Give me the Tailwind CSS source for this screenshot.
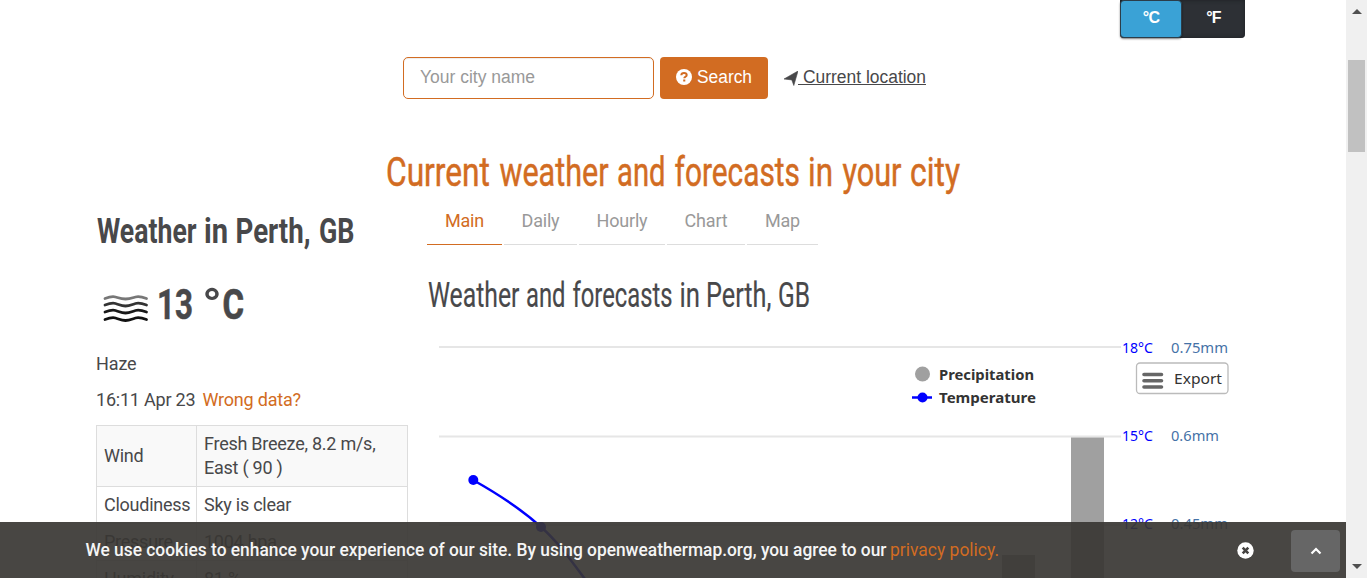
<!DOCTYPE html>
<html lang="en">
<head>
<meta charset="utf-8">
<title>Weather in Perth, GB</title>
<script src="https://cdn.jsdelivr.net/npm/@tailwindcss/browser@4"></script>
</head>
<body class="flex h-[578px] w-[1367px] overflow-hidden bg-white font-[Roboto,sans-serif] text-[18px] leading-6 text-[#48484a]">
<main class="relative h-[578px] w-[1346px] shrink-0 overflow-hidden">
  <!-- Unit switch -->
  <div class="flex h-[38px] justify-end pr-[101px]">
    <div class="flex w-[125px] rounded-b bg-[#2d3035] text-center font-[Liberation_Sans,sans-serif] text-[16px] font-bold leading-[34px] text-white shadow-[inset_0_0_4px_#1d2024]">
      <div class="w-[62px] rounded-[4px] border border-[#2b3d4a] bg-[#3aa2d6] tracking-[-0.8px] shadow-[0_1px_2px_rgba(0,0,0,.5)]">°C</div>
      <div class="w-[63px] pt-px tracking-[-0.8px]">°F</div>
    </div>
  </div>
  <!-- City search -->
  <div class="ml-[403px] mt-[19px] flex h-[42px] font-[Liberation_Sans,sans-serif] text-[18px] leading-[40px]">
    <div class="w-[251px] rounded-[5px] border border-[#d26c22] pl-4 text-[#999] shadow-[inset_0_1px_1px_rgba(0,0,0,.075)]"><svg class="block" width="120" height="40"><text x="0" y="25" textLength="115" lengthAdjust="spacingAndGlyphs" fill="#999">Your city name</text></svg></div>
    <button class="ml-1.5 flex w-[108px] items-center rounded-[4px] bg-[#d26c22] pb-0.5 pl-4 text-white">
      <svg width="16" height="16" viewBox="0 0 16 16"><circle cx="8" cy="8" r="8" fill="#fff"/><path d="M5.3 6.2C5.4 4.3 6.500 3.900 8 3.900c1.700 0 2.700.9 2.700 2.100 0 1.800-2.400 1.700-2.400 3.300" fill="none" stroke="#d26c22" stroke-width="2"/><path d="M7.200 10.500h2.100v2H7.200z" fill="#d26c22"/></svg>
      <svg class="ml-[5px]" width="56" height="40"><text x="0" y="26" textLength="55" lengthAdjust="spacingAndGlyphs" fill="#fff">Search</text></svg>
    </button>
    <a class="ml-4 flex items-center"><svg width="14" height="15" viewBox="0 0 14 15"><path d="M14 0 9.800 14.500 7.800 8.900 0 8z" fill="#48484a" stroke="#48484a" stroke-width=".6"/></svg><svg width="130" height="42"><path d="M0 27.500h128" stroke="#48484a"/><text x="5" y="26" textLength="123" lengthAdjust="spacingAndGlyphs" fill="#48484a">Current location</text></svg></a>
  </div>
  <h1 class="mt-[51px] h-[55px] pl-[386px]"><svg width="580" height="55" viewBox="386 150 580 55" font-size="41.500" fill="#d26c22" stroke="#d26c22" stroke-width=".5">
    <text x="386" y="186" textLength="104" lengthAdjust="spacingAndGlyphs">Current</text>
    <text x="499.500" y="186" textLength="109" lengthAdjust="spacingAndGlyphs">weather</text>
    <text x="617" y="186" textLength="48.500" lengthAdjust="spacingAndGlyphs">and</text>
    <text x="674.500" y="186" textLength="125.500" lengthAdjust="spacingAndGlyphs">forecasts</text>
    <text x="808" y="186" textLength="25" lengthAdjust="spacingAndGlyphs">in</text>
    <text x="842.500" y="186" textLength="59" lengthAdjust="spacingAndGlyphs">your</text>
    <text x="910" y="186" textLength="50" lengthAdjust="spacingAndGlyphs">city</text>
  </svg></h1>
  <div class="flex pl-24">
    <section class="w-[331px] shrink-0">
      <h2 class="h-[65px]"><svg width="320" height="65" viewBox="96 205 320 65" font-size="35" font-weight="700" fill="#48484a">
        <text x="97" y="243" textLength="99.500" lengthAdjust="spacingAndGlyphs">Weather</text>
        <text x="204" y="243" textLength="24" lengthAdjust="spacingAndGlyphs">in</text>
        <text x="235.500" y="243" textLength="75" lengthAdjust="spacingAndGlyphs">Perth,</text>
        <text x="319" y="243" textLength="35.500" lengthAdjust="spacingAndGlyphs">GB</text>
      </svg></h2>
      <div class="h-[82px]"><svg width="200" height="82" viewBox="96 270 200 82">
        <g fill="none" stroke-linecap="round" stroke-width="2.800">
          <path d="M105 298.500c4-1.500 7-2.500 10.500-1.500s6 2 10 2 6.500-1 10-2 7 0 11 1.500" stroke="#777"/>
          <path d="M105 305c4-1.500 7-2.500 10.500-1.500s6 2.500 10 2.500 6.500-1.500 10-2.500 7 0 11 1.500" stroke="#333"/>
          <path d="M105 312c4-1.500 7-2.500 10.500-1.500s6 2.500 10 2.500 6.500-1.500 10-2.500 7 0 11 1.500" stroke="#181818"/>
          <path d="M105 319.500c4-1.500 7-2.500 10.500-1.500s6 2.500 10 2.500 6.500-1.500 10-2.500 7 0 11 1.500" stroke="#111"/>
        </g>
        <g font-weight="700" font-size="42" fill="#48484a">
          <text x="157" y="319" textLength="36" lengthAdjust="spacingAndGlyphs" stroke="#48484a" stroke-width=".5">13</text>
          <text x="202" y="321" textLength="20" lengthAdjust="spacingAndGlyphs" font-size="46" font-weight="500">°</text>
          <text x="222.500" y="319" textLength="21.500" lengthAdjust="spacingAndGlyphs" stroke="#48484a" stroke-width=".7">C</text>
        </g>
      </svg></div>
      <p class="tracking-[-0.1px]">Haze</p>
      <p class="mt-3 tracking-[-0.22px]">16:11 Apr 23 <a class="ml-[3px] text-[#d26c22]">Wrong data?</a></p>
      <table class="mt-[13px] w-[312px] table-fixed border-collapse tracking-[-0.25px]">
        <colgroup><col class="w-[100px]"><col></colgroup>
        <tr class="bg-[#f9f9f9]"><td class="border border-[#ddd] px-[7px] py-1.5">Wind</td><td class="border border-[#ddd] px-[7px] py-1.5">Fresh Breeze, 8.2 m/s,<br>East ( 90 )</td></tr>
        <tr><td class="border border-[#ddd] px-[7px] py-1.5">Cloudiness</td><td class="border border-[#ddd] px-[7px] py-1.5">Sky is clear</td></tr>
        <tr class="bg-[#f9f9f9]"><td class="border border-[#ddd] px-[7px] py-1.5">Pressure</td><td class="border border-[#ddd] px-[7px] py-1.5">1004 hpa</td></tr>
        <tr><td class="border border-[#ddd] px-[7px] py-1.5">Humidity</td><td class="border border-[#ddd] px-[7px] py-1.5">81 %</td></tr>
      </table>
    </section>
    <section class="w-[820px] shrink-0">
      <nav class="flex h-10 gap-0.5 text-center leading-8 tracking-[-0.2px] text-[#999]">
        <a class="w-[75px] border-b border-[#d26c22] text-[#d26c22]">Main</a>
        <a class="w-[73px] border-b border-[#ddd]">Daily</a>
        <a class="w-[86px] border-b border-[#ddd]">Hourly</a>
        <a class="w-[78px] border-b border-[#ddd]">Chart</a>
        <a class="w-[71px] border-b border-[#ddd]">Map</a>
      </nav>
      <h3 class="h-[90px]"><svg width="400" height="90" viewBox="427 245 400 90" font-size="35" fill="#48484a" stroke="#48484a" stroke-width=".2">
        <text x="428" y="307" textLength="91.500" lengthAdjust="spacingAndGlyphs">Weather</text>
        <text x="526" y="307" textLength="39.500" lengthAdjust="spacingAndGlyphs">and</text>
        <text x="572.500" y="307" textLength="100" lengthAdjust="spacingAndGlyphs">forecasts</text>
        <text x="679.500" y="307" textLength="20.500" lengthAdjust="spacingAndGlyphs">in</text>
        <text x="706" y="307" textLength="65.500" lengthAdjust="spacingAndGlyphs">Perth,</text>
        <text x="778" y="307" textLength="32" lengthAdjust="spacingAndGlyphs">GB</text>
      </svg></h3>
      <!-- Forecast chart -->
      <svg class="block" width="820" height="243" viewBox="427 335 820 243" font-family="Noto Sans, sans-serif" font-size="14.500">
        <path d="M439 347h682M439 436.500h682M439 525h682" stroke="#e6e6e6" stroke-width="2"/>
        <path d="M1071 437.500h33V578h-33zM1002 555h33v23h-33z" fill="#a0a0a0"/>
        <path d="M473 480C498 494 519 507 541 527C557 541 570 559 585 579" fill="none" stroke="#00f" stroke-width="2.500"/>
        <circle cx="473.300" cy="480" r="5" fill="#00f"/><circle cx="541" cy="527" r="5" fill="#00f"/>
        <circle cx="922.500" cy="374" r="7.500" fill="#a0a0a0"/>
        <path d="M912 397.500h20" stroke="#00f" stroke-width="2.500"/><circle cx="922.500" cy="397.500" r="5" fill="#00f"/>
        <g font-weight="700" fill="#333"><text x="939" y="380" textLength="95" lengthAdjust="spacingAndGlyphs">Precipitation</text><text x="939" y="403" textLength="97" lengthAdjust="spacingAndGlyphs">Temperature</text></g>
        <g fill="#00f" font-size="14"><text x="1122" y="353" textLength="31" lengthAdjust="spacingAndGlyphs">18°C</text><text x="1122" y="441" textLength="31" lengthAdjust="spacingAndGlyphs">15°C</text><text x="1122" y="529" textLength="31" lengthAdjust="spacingAndGlyphs">12°C</text></g>
        <g fill="#4572a7" font-size="14"><text x="1171" y="353" textLength="57" lengthAdjust="spacingAndGlyphs">0.75mm</text><text x="1171" y="441" textLength="48" lengthAdjust="spacingAndGlyphs">0.6mm</text><text x="1171" y="529" textLength="57" lengthAdjust="spacingAndGlyphs">0.45mm</text></g>
        <rect x="1136.500" y="363" width="91.500" height="30.500" rx="3.500" fill="#fff" stroke="#bbb" stroke-width="1.300"/>
        <path d="M1144 374.500h17.500M1144 380.800h17.500M1144 387h17.500" stroke="#666" stroke-width="3.600" stroke-linecap="round"/>
        <text x="1174" y="384" textLength="48" lengthAdjust="spacingAndGlyphs" fill="#333">Export</text>
      </svg>
    </section>
  </div>
  <!-- Cookie notice lying over the page -->
  <div class="absolute bottom-0 left-0 flex h-14 w-[1346px] items-center bg-[#383633]/92 pl-[85px] font-medium text-[#f2f2f2]">
    <svg width="920" height="56"><text x="0.500" y="34" textLength="801" lengthAdjust="spacingAndGlyphs" font-weight="500" fill="#f5f5f5">We use cookies to enhance your experience of our site. By using openweathermap.org, you agree to our</text><text x="805" y="34" textLength="109" lengthAdjust="spacingAndGlyphs" font-weight="400" fill="#d26c22">privacy policy.</text></svg>
    <svg class="ml-[232px]" width="17" height="17" viewBox="0 0 17 17"><circle cx="8.500" cy="8.500" r="8.200" fill="#fff"/><path d="m5.700 5.700 5.600 5.600m0-5.600-5.600 5.600" stroke="#454341" stroke-width="2.600"/></svg>
    <button class="ml-[37px] mt-0.5 flex h-[42px] w-[49px] items-center justify-center rounded-[4px] bg-[#666]"><svg width="12" height="8" viewBox="0 0 12 8"><path d="m1.500 6.500 4.500-4.500 4.500 4.500" fill="none" stroke="#fff" stroke-width="2.200"/></svg></button>
  </div>
</main>
<!-- Window scrollbar -->
<aside class="flex h-[578px] w-[21px] flex-col items-center bg-[#f0f0f0] pt-[9px]">
  <svg width="10" height="5" viewBox="0 0 10 5"><path d="M0 5 5 0l5 5z" fill="#505050"/></svg>
  <div class="mt-[46px] h-[92px] w-[17px] bg-[#c1c1c1]"></div>
  <svg class="mt-auto mb-[9px]" width="10" height="5" viewBox="0 0 10 5"><path d="m0 0 5 5 5-5z" fill="#505050"/></svg>
</aside>
</body>
</html>
